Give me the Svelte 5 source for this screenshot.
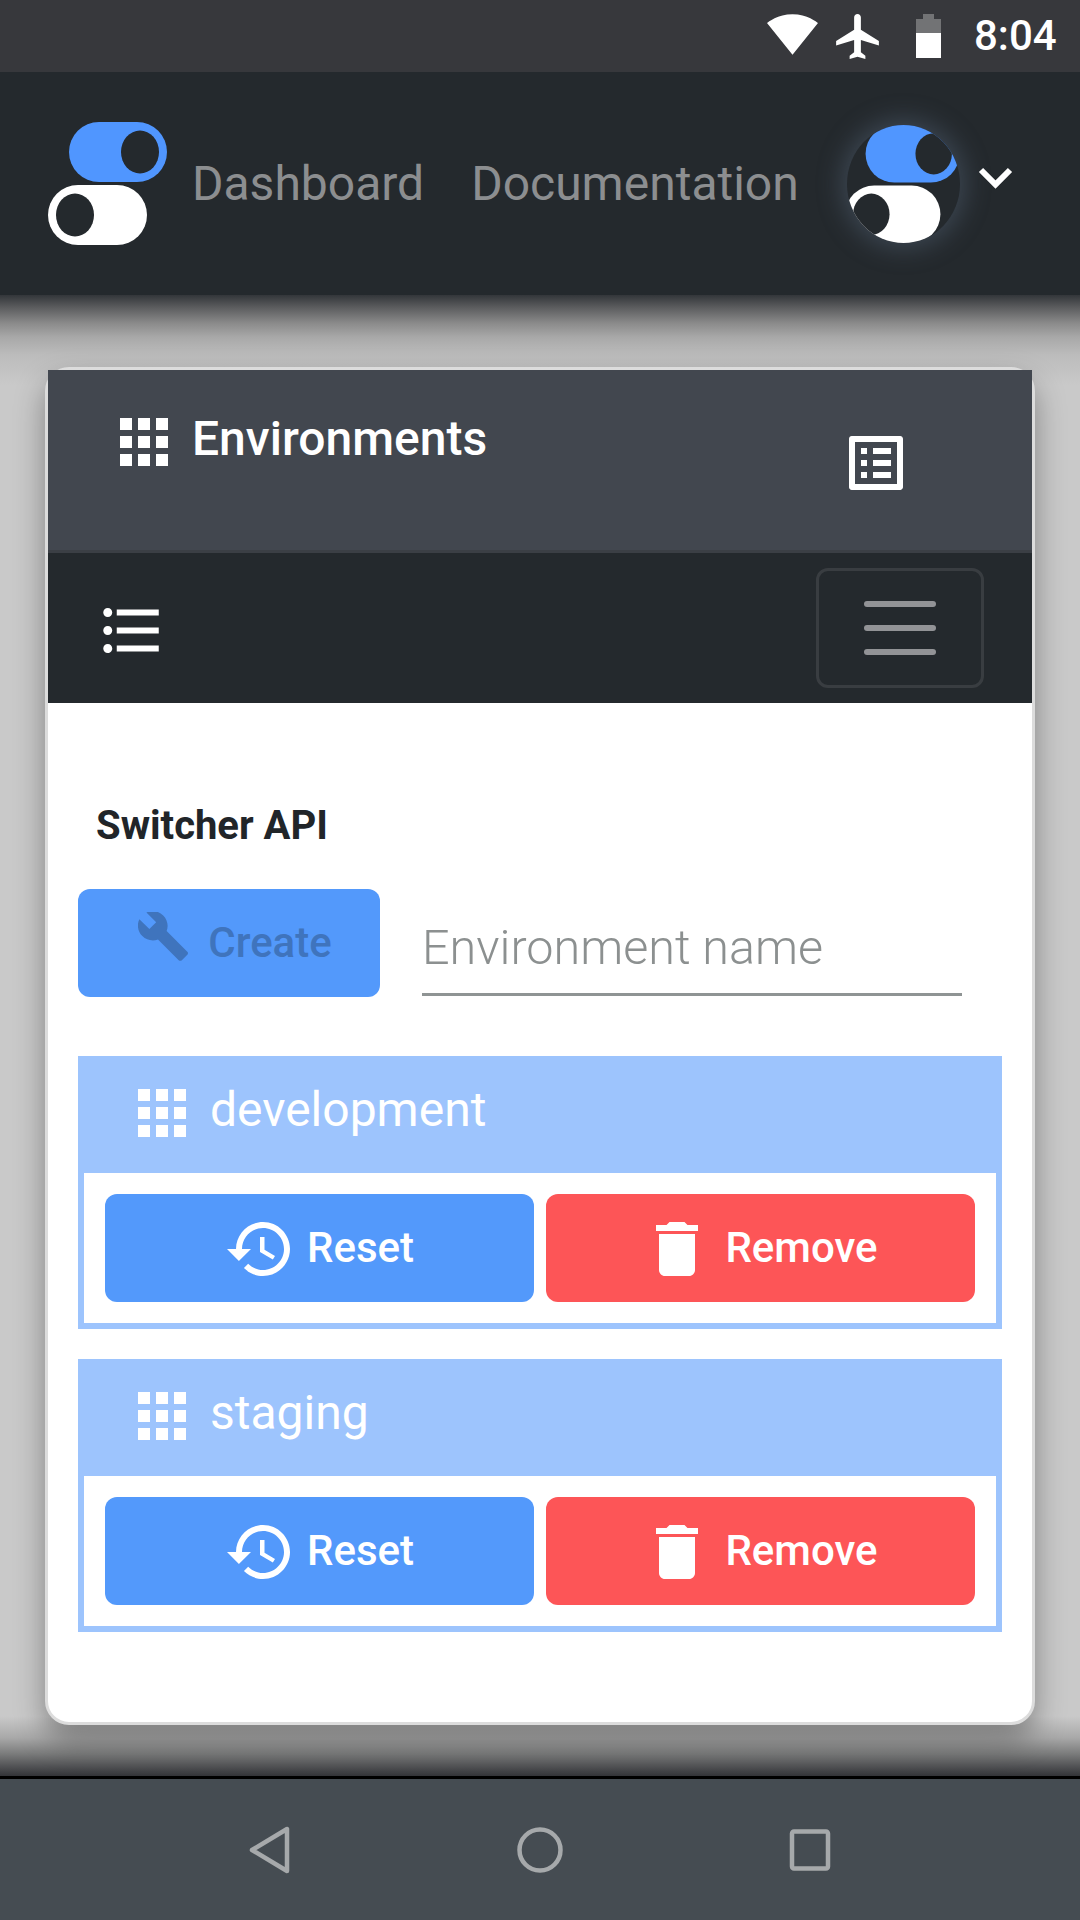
<script>
  const envs = ["development", "staging"];
</script>

{#snippet logo()}
  <svg class="logo-svg" viewBox="0 0 119 123">
    <rect x="21" y="0" width="98" height="60" rx="30" fill="#5096ff" />
    <ellipse cx="92" cy="30" rx="19" ry="21.5" fill="#24292d" />
    <rect x="0" y="63" width="99" height="60" rx="30" fill="#fff" />
    <ellipse cx="27" cy="93" rx="19" ry="21.5" fill="#24292d" />
  </svg>
{/snippet}

{#snippet apps()}
  <svg class="apps" viewBox="4 4 16 16" fill="#fff">
    <path d="M4 8h4V4H4v4zm6 12h4v-4h-4v4zm-6 0h4v-4H4v4zm0-6h4v-4H4v4zm6 0h4v-4h-4v4zm6-10v4h4V4h-4zm-6 4h4V4h-4v4zm6 6h4v-4h-4v4zm0 6h4v-4h-4v4z" />
  </svg>
{/snippet}

<div class="page">
  <div class="status">
    <svg class="wifi" viewBox="0.36 3 23.28 18.5" fill="#fff">
      <path d="M12.01 21.49L23.64 7c-.45-.34-4.93-4-11.64-4C5.28 3 .81 6.66.36 7l11.64 14.5.01-.01z" />
    </svg>
    <svg class="plane" viewBox="2 2 19 20" fill="#fff">
      <path d="M21 16v-2l-8-5V3.5c0-.83-.67-1.5-1.5-1.5S10 2.67 10 3.5V9l-8 5v2l8-2.5V19l-2 1.5V22l3.5-1 3.5 1v-1.5L13 19v-5.5l8 2.5z" />
    </svg>
    <svg class="battery" viewBox="0 0 25 44">
      <path d="M7 0h11v5h7v14H0V5h7z" fill="#727375" />
      <rect y="19" width="25" height="25" fill="#fff" />
    </svg>
    <span class="time">8:04</span>
  </div>

  <nav class="topnav">
    <div class="brand">{@render logo()}</div>
    <a class="link first">Dashboard</a>
    <a class="link">Documentation</a>
    <div class="avatar">{@render logo()}</div>
    <svg class="chevron" viewBox="0 0 35 22">
      <path d="M3 3l14.5 14.5L32 3" fill="none" stroke="#fff" stroke-width="6" />
    </svg>
  </nav>

  <main class="main">
    <section class="card">
      <header class="card-head">
        <div class="head-title">
          {@render apps()}
          <h1>Environments</h1>
        </div>
        <svg class="list-alt" viewBox="3 3 18 18" fill="#fff">
          <path d="M19 5v14H5V5h14m1.1-2H3.9c-.5 0-.9.4-.9.9v16.2c0 .4.4.9.9.9h16.2c.4 0 .9-.5.9-.9V3.9c0-.5-.5-.9-.9-.9zM11 7h6v2h-6V7zm0 4h6v2h-6v-2zm0 4h6v2h-6zM7 7h2v2H7zm0 4h2v2H7zm0 4h2v2H7z" />
        </svg>
      </header>

      <div class="toolbar">
        <svg class="bullets" viewBox="2.5 4.5 18.5 15" fill="#fff">
          <path d="M4 10.5c-.83 0-1.5.67-1.5 1.5s.67 1.5 1.5 1.5 1.5-.67 1.5-1.5-.67-1.5-1.5-1.5zm0-6c-.83 0-1.5.67-1.5 1.5S3.17 7.5 4 7.5 5.5 6.83 5.5 6 4.83 4.5 4 4.5zm0 12c-.83 0-1.5.68-1.5 1.5s.68 1.5 1.5 1.5 1.5-.68 1.5-1.5-.67-1.5-1.5-1.5zM7 19h14v-2H7v2zm0-6h14v-2H7v2zm0-8v2h14V5H7z" />
        </svg>
        <button class="toggler" aria-label="Toggle">
          <span></span><span></span><span></span>
        </button>
      </div>

      <div class="content">
        <h2>Switcher API</h2>
        <div class="create-row">
          <button class="btn create">
            <svg class="wrench" viewBox="1 1.5 22 22" fill="#3f74bd">
              <path d="M22.7 19l-9.1-9.1c.9-2.3.4-5-1.5-6.9-2-2-5-2.4-7.4-1.3L9 6 6 9 1.6 4.7C.4 7.1.9 10.1 2.9 12.1c1.9 1.9 4.6 2.4 6.9 1.5l9.1 9.1c.4.4 1 .4 1.4 0l2.3-2.3c.5-.4.5-1.1.1-1.4z" />
            </svg>
            <span>Create</span>
          </button>
          <input class="name" placeholder="Environment name" />
        </div>

        {#each envs as env}
          <div class="env">
            <div class="env-head">
              {@render apps()}
              <span>{env}</span>
            </div>
            <div class="env-body">
              <button class="btn reset">
                <svg class="history" viewBox="1 3 21 18" fill="#fff">
                  <path d="M13 3c-4.97 0-9 4.03-9 9H1l3.89 3.89.07.14L9 12H6c0-3.87 3.13-7 7-7s7 3.13 7 7-3.13 7-7 7c-1.93 0-3.68-.79-4.94-2.06l-1.42 1.42C8.27 19.99 10.51 21 13 21c4.97 0 9-4.03 9-9s-4.03-9-9-9zm-1 5v5l4.28 2.54.72-1.21-3.5-2.08V8H12z" />
                </svg>
                <span>Reset</span>
              </button>
              <button class="btn remove">
                <svg class="trash" viewBox="5 3 14 18" fill="#fff">
                  <path d="M6 19c0 1.1.9 2 2 2h8c1.1 0 2-.9 2-2V7H6v12zM19 4h-3.5l-1-1h-5l-1 1H5v2h14V4z" />
                </svg>
                <span>Remove</span>
              </button>
            </div>
          </div>
        {/each}
      </div>
    </section>
  </main>

  <footer class="sysbar">
    <svg viewBox="0 0 50 50" class="sys">
      <path d="M42 4v42L7 25z" fill="none" stroke="#a6a9ab" stroke-width="4.5" stroke-linejoin="round" />
    </svg>
    <svg viewBox="0 0 50 50" class="sys">
      <circle cx="25" cy="25" r="20.5" fill="none" stroke="#a6a9ab" stroke-width="4.5" />
    </svg>
    <svg viewBox="0 0 50 50" class="sys">
      <rect x="7" y="6.5" width="36" height="37" rx="2" fill="none" stroke="#a6a9ab" stroke-width="4.5" />
    </svg>
  </footer>
</div>

<style>
  :global(body) {
    margin: 0;
    font-family: Roboto, "Liberation Sans", sans-serif;
  }

  .page {
    display: flex;
    flex-direction: column;
    width: 1080px;
    height: 1920px;
    overflow: hidden;
  }

  /* status bar */
  .status {
    display: flex;
    align-items: center;
    justify-content: flex-end;
    height: 72px;
    flex: none;
    padding-right: 25px;
    box-sizing: border-box;
    background: #37383c;
  }
  .wifi { width: 51px; height: 41px; margin-right: 18px; margin-top: -3px; }
  .plane { width: 43px; height: 45px; margin-right: 37px; }
  .battery { width: 25px; height: 44px; margin-right: 33px; }
  .time {
    color: #fff;
    font-size: 42px;
    font-weight: 500;
    line-height: 72px;
    width: 81px;
  }

  /* top nav */
  .topnav {
    display: flex;
    align-items: center;
    flex: none;
    height: 223px;
    padding: 0 67px 0 48px;
    box-sizing: border-box;
    background: #24292d;
  }
  .brand { width: 119px; height: 123px; margin-right: 25px; }
  .logo-svg { display: block; width: 100%; height: 100%; }
  .link {
    color: #8c8e90;
    font-size: 48px;
    line-height: 54px;
  }
  .first { margin-right: 47px; }
  .avatar {
    width: 113px;
    height: 118px;
    margin-left: auto;
    margin-right: 18px;
    border-radius: 50%;
    overflow: hidden;
    background: #24292d;
    box-shadow: 0 0 24px 6px rgba(95, 112, 135, 0.4);
  }
  .avatar .logo-svg { width: 115px; height: 118px; margin-left: -2px; }
  .chevron { width: 35px; height: 22px; margin-bottom: 12px; }

  /* page body */
  .main {
    flex: 1;
    background-color: #c9c9c9;
    background-image:
      linear-gradient(to bottom, #33363a 0, #5a5b5d 12px, #8a8a8a 28px, #a8a8a8 42px, #bcbcbc 60px, rgba(201, 201, 201, 0) 90px),
      linear-gradient(to top, #333438 0, #4c4d50 8px, #7a7b7b 22px, #a8a8a8 38px, rgba(201, 201, 201, 0) 60px);
  }
  .card {
    width: 990px;
    height: 1358px;
    margin: 72px 0 0 45px;
    box-sizing: border-box;
    border: 3px solid #dcdcdc;
    border-radius: 24px;
    background: #fff;
    box-shadow: 0 14px 30px rgba(0, 0, 0, 0.34);
  }
  .card-head {
    display: flex;
    align-items: flex-start;
    justify-content: space-between;
    height: 183px;
    padding: 48px 129px 0 72px;
    box-sizing: border-box;
    border-bottom: 3px solid #3b3f45;
    background: #42474f;
  }
  .head-title { display: flex; align-items: center; gap: 24px; }
  .apps { width: 48px; height: 48px; flex: none; }
  h1 {
    margin: -6px 0 0;
    color: #fff;
    font-size: 48px;
    font-weight: 500;
    line-height: 54px;
  }
  .list-alt { width: 54px; height: 54px; margin-top: 18px; }

  .toolbar {
    display: flex;
    align-items: center;
    justify-content: space-between;
    height: 150px;
    padding: 0 48px 0 55px;
    box-sizing: border-box;
    background: #24292d;
  }
  .bullets { width: 56px; height: 45px; margin-top: 5px; }
  .toggler {
    display: flex;
    flex-direction: column;
    align-items: center;
    justify-content: center;
    gap: 18px;
    width: 168px;
    height: 120px;
    padding: 0;
    border: 3px solid #393d41;
    border-radius: 12px;
    background: none;
  }
  .toggler span {
    display: block;
    width: 72px;
    height: 6px;
    border-radius: 3px;
    background: #929396;
  }

  .content { padding: 100px 30px 0; }
  h2 {
    margin: 0 0 40px 18px;
    color: #212529;
    font-size: 40px;
    font-weight: 700;
    line-height: 46px;
  }
  .create-row {
    display: flex;
    align-items: flex-end;
    gap: 42px;
    margin-bottom: 59px;
  }
  .btn {
    display: flex;
    align-items: center;
    justify-content: center;
    height: 108px;
    padding: 0 0 2px;
    box-sizing: border-box;
    border: 0;
    border-radius: 12px;
    color: #fff;
    font-family: inherit;
    font-size: 42px;
    font-weight: 500;
  }
  .create {
    flex: none;
    width: 302px;
    gap: 20px;
    padding-left: 12px;
    background: #5399fb;
    color: #3f74bd;
  }
  .wrench { width: 50px; height: 50px; margin-top: -11px; }
  .name {
    width: 540px;
    height: 94px;
    margin-bottom: 1px;
    padding: 0;
    box-sizing: border-box;
    border: 0;
    border-bottom: 3px solid #8f9494;
    outline: none;
    background: none;
    font-family: inherit;
    font-size: 48.5px;
    font-weight: 300;
  }
  .name::placeholder { color: #8c9090; opacity: 1; }

  .env {
    margin-bottom: 30px;
    border: 6px solid #9dc4fd;
    border-top: 0;
  }
  .env-head {
    display: flex;
    align-items: center;
    gap: 24px;
    height: 117px;
    padding: 0 0 3px 54px;
    box-sizing: border-box;
    background: #9dc4fd;
    color: #fff;
    font-size: 48px;
    line-height: 54px;
  }
  .env-head span { margin-top: -6px; }
  .env-body {
    display: grid;
    grid-template-columns: 1fr 1fr;
    gap: 12px;
    padding: 21px;
  }
  .reset { background: #5399fb; gap: 17px; padding-left: 2px; }
  .remove { background: #fd5557; gap: 26px; padding-left: 12px; }
  .history { width: 63px; height: 54px; margin-top: 3px; }
  .trash { width: 44px; height: 54px; margin-top: 4px; }

  /* android nav */
  .sysbar {
    display: flex;
    align-items: center;
    justify-content: center;
    gap: 220px;
    height: 144px;
    flex: none;
    box-sizing: border-box;
    border-top: 3px solid #000;
    background: #454c52;
  }
  .sys { width: 50px; height: 50px; }
</style>
